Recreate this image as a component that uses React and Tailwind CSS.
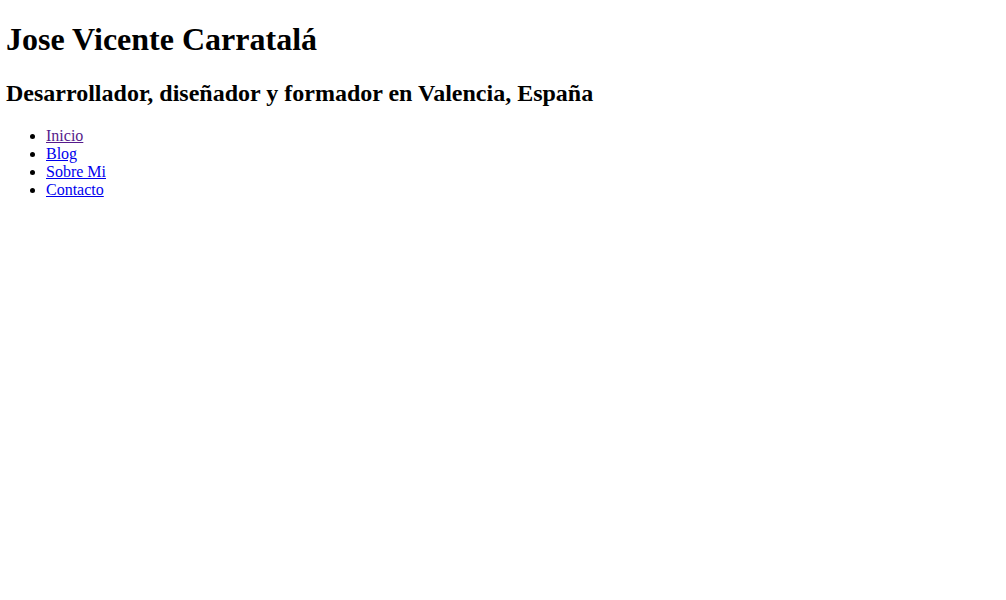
import React from 'react';

export default function App() {
    const links = ['Inicio', 'Blog', 'Sobre Mi', 'Contacto'];

    return (
        <div className="min-h-screen bg-white pl-[6px] pr-2 py-[21.44px] font-['Liberation_Serif',serif] text-base leading-[normal] text-black">
            <header>
                <h1 className="text-[32px] font-bold">Jose Vicente Carratalá</h1>
                <h2 className="mt-[21.44px] text-[24px] font-bold">Desarrollador, diseñador y formador en Valencia, España</h2>
            </header>
            <nav className="mt-[19.92px]">
                <ul className="list-disc pl-10">
                    {links.map((link, idx) => (
                        <li key={link}>
                            <a href="#" className={`underline ${idx === 0 ? 'text-[#551a8b]' : 'text-[#0000ee]'}`}>
                                {link}
                            </a>
                        </li>
                    ))}
                </ul>
            </nav>
        </div>
    );
}
